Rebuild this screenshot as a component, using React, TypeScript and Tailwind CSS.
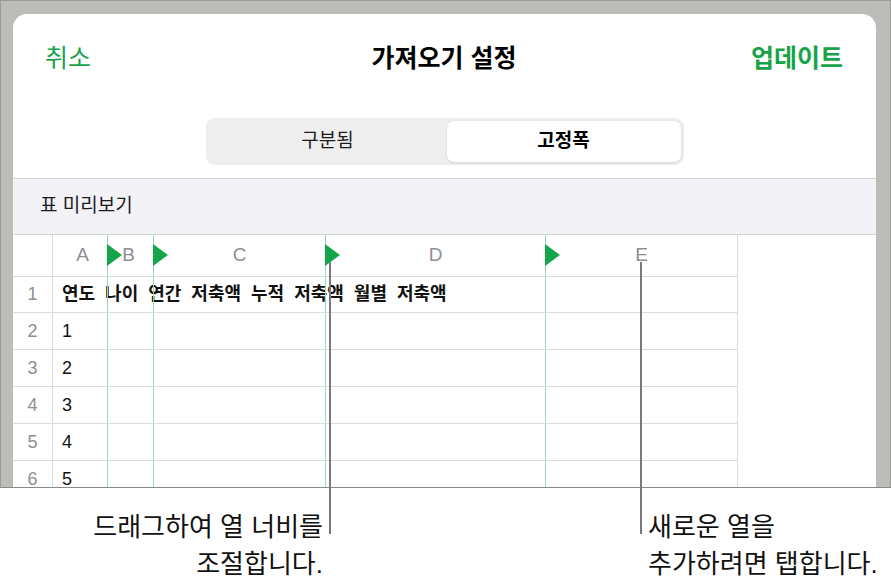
import React from 'react'

const font = "font-['Liberation_Sans','Noto_Sans_CJK_KR',sans-serif]"

function Marker() {
  return (
    <svg className="absolute left-[-1px] top-[9px]" width="15" height="22" viewBox="0 0 15 22">
      <polygon points="0,0 15,11 0,22" fill="#14a54b" />
    </svg>
  )
}

const rowCells = 'grid shrink-0 grid-cols-[40px_54px_46px_172px_220px_193px] w-[725px] border-b border-[#dcdcdc]'

function DataRow({ num, children, h }: { num: number; children?: React.ReactNode; h: string }) {
  return (
    <div className={`${rowCells} ${h}`}>
      <div className="flex items-center justify-center border-r border-[#dcdcdc] text-[18px] text-[#8e8e93]">{num}</div>
      <div className="flex items-center pl-[9px] whitespace-nowrap text-[18px] text-[#111]">{children}</div>
      <div className="border-l border-[#96dbb3]" />
      <div className="border-l border-[#96dbb3]" />
      <div className="border-l border-[#96dbb3]" />
      <div className="border-l border-[#96dbb3] border-r border-r-[#dcdcdc]" />
    </div>
  )
}

export default function App() {
  return (
    <div className={`relative w-[891px] h-[588px] overflow-hidden bg-white ${font}`}>
      {/* device screenshot */}
      <div className="flex h-[488px] flex-col border border-[#9a9b98] border-b-[#8a8a8a] bg-[#bcbdb9] pl-[12px] pr-[14px] pt-[13px]">
        <div className="flex flex-1 flex-col overflow-hidden rounded-t-[14px] bg-white">
          {/* nav bar */}
          <div className="grid h-[88px] shrink-0 grid-cols-[1fr_auto_1fr] items-center pl-[32px] pr-[33px] pt-[2px]">
            <span className="text-[25px] text-[#18a349]">취소</span>
            <span className="text-[25px] font-bold text-black">가져오기 설정</span>
            <span className="text-right text-[25px] font-bold text-[#18a349]">업데이트</span>
          </div>

          {/* segmented control */}
          <div className="flex shrink-0 justify-center pt-[16px] pb-[13px]">
            <div className="flex h-[47px] w-[478px] rounded-[9px] bg-[#eeeeef] p-[3px]">
              <div className="flex flex-1 items-center justify-center text-[19px] text-[#1c1c1e]">구분됨</div>
              <div className="flex w-[234px] items-center justify-center rounded-[7px] bg-white text-[19px] font-bold text-black shadow-[0_1px_3px_rgba(0,0,0,0.12)]">
                고정폭
              </div>
            </div>
          </div>

          {/* section header */}
          <div className="flex h-[57px] shrink-0 items-center border-y border-[#d3d3d8] bg-[#f2f2f7] pl-[27px] text-[19px] text-[#1c1c1e]">
            표 미리보기
          </div>

          {/* table */}
          <div className={`${rowCells} h-[42px]`}>
            <div className="border-r border-[#dcdcdc]" />
            {['A', 'B', 'C', 'D', 'E'].map((c, i) => (
              <div
                key={c}
                className={`relative flex items-center justify-center text-[19px] text-[#8e8e93] ${i > 0 ? 'border-l border-[#96dbb3]' : ''} ${i === 4 ? 'border-r border-r-[#dcdcdc]' : ''}`}
              >
                {i > 0 && <Marker />}
                <span className={i === 0 ? 'pl-[5px]' : i === 1 ? 'pr-[4px]' : ''}>{c}</span>
              </div>
            ))}
          </div>
          <DataRow num={1} h="h-[36px]">
            <span className="font-bold [word-spacing:5px]">연도 나이 연간 저축액 누적 저축액 월별 저축액</span>
          </DataRow>
          {[1, 2, 3, 4, 5].map((n) => (
            <DataRow key={n} num={n + 1} h="h-[37px]">
              {n}
            </DataRow>
          ))}
        </div>
      </div>

      {/* callout lines */}
      <div className="absolute left-[329px] top-[262px] h-[272px] w-[2px] bg-[#7a7a7a]" />
      <div className="absolute left-[640px] top-[262px] h-[272px] w-[2px] bg-[#7a7a7a]" />

      {/* callout captions */}
      <div className="flex pt-[21px] text-[26px] leading-[37px] text-[#111]">
        <div className="w-[323px] text-right">
          <div>드래그하여 열 너비를</div>
          <div>조절합니다.</div>
        </div>
        <div className="pl-[325px] whitespace-nowrap">
          <div>새로운 열을</div>
          <div>추가하려면 탭합니다.</div>
        </div>
      </div>
    </div>
  )
}
